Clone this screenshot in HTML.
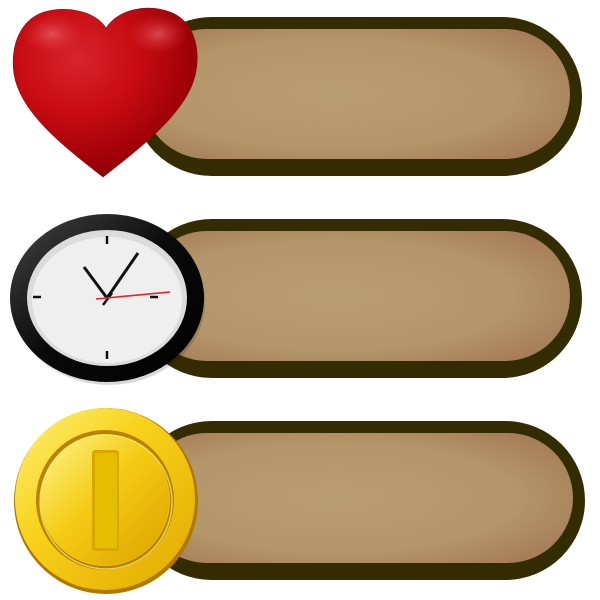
<!DOCTYPE html>
<html><head><style>
html,body{margin:0;padding:0;background:#fff;width:600px;height:600px;overflow:hidden}
</style></head><body>
<svg width="600" height="600" viewBox="0 0 600 600" xmlns="http://www.w3.org/2000/svg">
<defs>
<radialGradient id="parch" cx="0.45" cy="0.5" r="0.7">
<stop offset="0" stop-color="#b99d72"/>
<stop offset="0.6" stop-color="#b39669"/>
<stop offset="1" stop-color="#a27653"/>
</radialGradient>
<radialGradient id="heart" cx="0.35" cy="0.3" r="0.8">
<stop offset="0" stop-color="#d8242c"/>
<stop offset="0.4" stop-color="#c80c12"/>
<stop offset="0.8" stop-color="#9a0006"/>
<stop offset="1" stop-color="#6a0002"/>
</radialGradient>
<radialGradient id="hl" cx="0.5" cy="0.5" r="0.5">
<stop offset="0" stop-color="#e8646a" stop-opacity="0.7"/>
<stop offset="1" stop-color="#e03038" stop-opacity="0"/>
</radialGradient>
<linearGradient id="coin" x1="0" y1="0" x2="1" y2="1">
<stop offset="0" stop-color="#fff27a"/>
<stop offset="0.4" stop-color="#f8d21a"/>
<stop offset="1" stop-color="#e0a800"/>
</linearGradient>
<linearGradient id="coinin" x1="0" y1="0" x2="1" y2="1">
<stop offset="0" stop-color="#fff590"/>
<stop offset="0.45" stop-color="#f5cc14"/>
<stop offset="1" stop-color="#dba000"/>
</linearGradient>
<linearGradient id="rim" x1="0" y1="0" x2="1" y2="1">
<stop offset="0" stop-color="#444"/>
<stop offset="0.5" stop-color="#0a0a0a"/>
<stop offset="1" stop-color="#000"/>
</linearGradient>
</defs>

<rect x="132" y="17" width="450" height="159" rx="80" fill="#332c00"/>
<rect x="142" y="29" width="428" height="130" rx="65" fill="url(#parch)"/>
<rect x="132" y="219" width="450" height="159" rx="80" fill="#332c00"/>
<rect x="142" y="231" width="428" height="130" rx="65" fill="url(#parch)"/>
<rect x="132" y="421" width="453" height="159" rx="80" fill="#332c00"/>
<rect x="142" y="433" width="431" height="130" rx="65" fill="url(#parch)"/>

<path d="M106,28 C94,10 66,6 44,12 C20,20 10,46 14,74 C20,112 62,145 103,177 C144,145 186,112 195,76 C202,46 192,20 170,12 C148,4 120,8 106,28 Z" fill="url(#heart)" stroke="#8a1010" stroke-width="0.6"/>
<ellipse cx="52" cy="34" rx="30" ry="20" fill="url(#hl)"/>
<ellipse cx="158" cy="34" rx="30" ry="20" fill="url(#hl)"/>

<ellipse cx="109" cy="302" rx="96" ry="83" fill="#000" opacity="0.15"/>
<ellipse cx="107" cy="298" rx="97" ry="84" fill="url(#rim)"/>
<ellipse cx="107" cy="298" rx="80" ry="68" fill="#dcdcdc"/>
<ellipse cx="107" cy="300" rx="75" ry="63" fill="#efefef"/>
<g stroke="#111" stroke-width="2.5">
<line x1="107" y1="236" x2="107" y2="244"/>
<line x1="107" y1="351" x2="107" y2="359"/>
<line x1="33" y1="297" x2="41" y2="297"/>
<line x1="150" y1="297" x2="158" y2="297"/>
<line x1="107" y1="298" x2="84" y2="267" stroke-width="3"/>
<line x1="107" y1="298" x2="138" y2="253" stroke-width="3"/>
<line x1="103" y1="305" x2="112" y2="293" stroke-width="2.5"/>
</g>
<line x1="96" y1="299" x2="170" y2="292" stroke="#ee1c24" stroke-width="1.6"/>

<ellipse cx="106" cy="501" rx="92" ry="93" fill="#b07800"/>
<ellipse cx="105" cy="499" rx="90" ry="91" fill="url(#coin)"/>
<ellipse cx="105" cy="500" rx="67" ry="68" fill="none" stroke="#b88200" stroke-width="4"/>
<ellipse cx="105" cy="500" rx="64" ry="65" fill="url(#coinin)"/>
<ellipse cx="106" cy="502" rx="66" ry="67" fill="none" stroke="#fff07a" stroke-width="1.5" opacity="0.7"/>
<rect x="92" y="450" width="27" height="101" rx="3" fill="#d9a800"/>
<rect x="95" y="453" width="22" height="95" rx="2" fill="#e6be00"/>
</svg>
</body></html>
